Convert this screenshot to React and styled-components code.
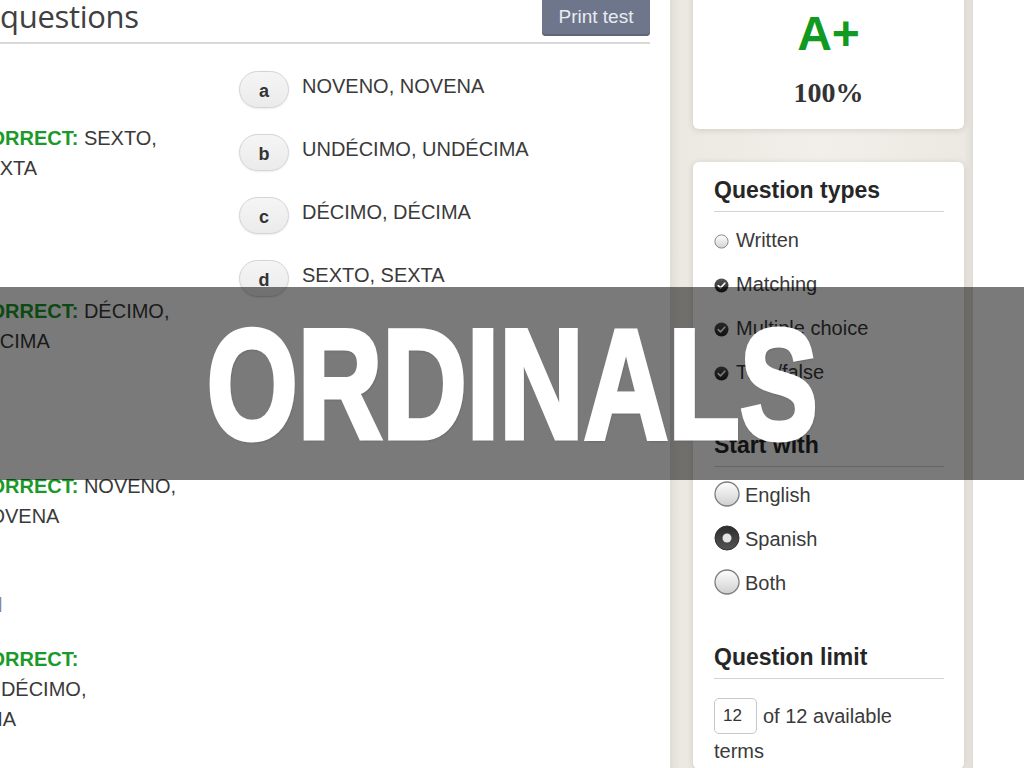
import React from "react";
import styled, { createGlobalStyle } from "styled-components";

const Global = createGlobalStyle`
  html, body { margin: 0; padding: 0; background: #fff; }
  body { font-family: "Liberation Sans", Arial, sans-serif; }
`;

const Page = styled.div`
  position: relative;
  width: 1024px;
  height: 768px;
  overflow: hidden;
  display: flex;
  background: #fff;
`;

const Main = styled.section`
  width: 650px;
  flex: none;
  display: flex;
  flex-direction: column;
`;

const Header = styled.header`
  height: 42px;
  border-bottom: 2px solid #d9d9d9;
  display: flex;
  justify-content: space-between;
  align-items: flex-start;
`;

const Title = styled.h1`
  margin: -4px 0 0 0;
  font-family: "Open Sans", sans-serif;
  font-weight: 400;
  font-size: 31px;
  letter-spacing: -0.3px;
  line-height: 40px;
  color: #404040;
`;

const PrintButton = styled.button`
  margin-top: -6px;
  height: 42px;
  width: 108px;
  border: none;
  border-radius: 4px;
  background: #6d768b;
  box-shadow: inset 0 -2px 0 #5e6679;
  color: #e9ebf1;
  font-family: "Liberation Sans", Arial, sans-serif;
  font-size: 19px;
  padding: 3px 0 0;
`;

const Content = styled.div`
  display: flex;
`;

const Prompts = styled.div`
  width: 239px;
  flex: none;
  overflow: hidden;
  padding-top: 79px;
  display: flex;
  flex-direction: column;
`;

const Block = styled.div`
  margin-top: ${(p) => p.$gap}px;
  display: flex;
  flex-direction: column;
`;

const Line = styled.div`
  margin-left: ${(p) => p.$shift}px;
  white-space: nowrap;
  font-size: 20px;
  line-height: 30px;
  color: ${(p) => (p.$faint ? "#8a8a8a" : "#3a3a3a")};
`;

const Correct = styled.span`
  color: #1b9a2b;
  font-weight: 700;
`;

const Choices = styled.div`
  padding-top: 27px;
  display: flex;
  flex-direction: column;
`;

const Choice = styled.div`
  height: 63px;
  display: flex;
  align-items: flex-start;
  gap: 13px;
`;

const Pill = styled.div`
  width: 48px;
  height: 32px;
  padding-top: 3px;
  box-sizing: content-box;
  border: 1px solid #d4d4d4;
  border-radius: 19px;
  background: linear-gradient(#f5f5f5, #ebebeb);
  box-shadow: 0 1px 2px rgba(0, 0, 0, 0.08);
  display: flex;
  align-items: center;
  justify-content: center;
  font-weight: 700;
  font-size: 18px;
  color: #333;
`;

const ChoiceText = styled.div`
  margin-top: 3px;
  font-size: 20px;
  line-height: 24px;
  color: #3a3a3a;
`;

const Sidebar = styled.aside`
  margin-left: 20px;
  width: 303px;
  flex: none;
  box-sizing: border-box;
  padding: 0 9px 0 23px;
  display: flex;
  flex-direction: column;
  gap: 33px;
  background: linear-gradient(
    to right,
    #e0dcd6 0px,
    #ece8e2 10px,
    #f2efea 50%,
    #ece8e2 calc(100% - 9px),
    #e0dcd6 100%
  );
`;

const Card = styled.div`
  background: #fff;
  border-radius: 6px;
  box-shadow: 0 1px 6px rgba(80, 70, 60, 0.18);
`;

const ScoreCard = styled(Card)`
  margin-top: -20px;
  padding: 28px 0 19px;
  display: flex;
  flex-direction: column;
  align-items: center;
  gap: 16px;
`;

const Grade = styled.div`
  font-weight: 700;
  font-size: 48px;
  line-height: 52px;
  color: #119a22;
`;

const Percent = styled.div`
  font-family: "Liberation Serif", "Times New Roman", serif;
  font-weight: 700;
  font-size: 28px;
  line-height: 34px;
  color: #333;
`;

const OptionsCard = styled(Card)`
  flex: 1;
  padding: 14px 20px 0 21px;
  display: flex;
  flex-direction: column;
`;

const Section = styled.div`
  margin-bottom: ${(p) => p.$after}px;
`;

const Heading = styled.h2`
  margin: 0;
  padding-bottom: 7px;
  border-bottom: 1px solid #d4d4d4;
  font-size: 23px;
  line-height: 28px;
  font-weight: 700;
  color: #262626;
`;

const OptionList = styled.div`
  margin-top: 6px;
  display: flex;
  flex-direction: column;
`;

const Option = styled.div`
  height: 44px;
  display: flex;
  align-items: center;
  gap: ${(p) => (p.$large ? 5 : 7)}px;
  font-size: 20px;
  color: #3a3a3a;
  svg {
    flex: none;
    margin-top: ${(p) => (p.$large ? -3 : 3)}px;
  }
`;

const Limit = styled.div`
  margin-top: 20px;
  font-size: 20px;
  line-height: 35px;
  color: #3a3a3a;
`;

const LimitInput = styled.span`
  display: inline-block;
  vertical-align: middle;
  box-sizing: border-box;
  width: 43px;
  height: 36px;
  margin: -4px 6px 0 0;
  padding: 2px 0 0 8px;
  border: 1px solid #c9c9c9;
  border-radius: 5px;
  font-size: 17px;
  line-height: 30px;
  color: #333;
`;

const Band = styled.div`
  position: absolute;
  left: 0;
  right: 0;
  top: 287px;
  height: 193px;
  background: rgba(0, 0, 0, 0.52);
  display: flex;
  align-items: center;
  justify-content: center;
`;

const BandTitle = styled.div`
  font-family: "Liberation Sans", Arial, sans-serif;
  font-weight: 700;
  font-size: 156px;
  line-height: 1;
  color: #fff;
  transform: scaleX(0.75);
  text-shadow: 1px 2px 3px rgba(0, 0, 0, 0.45);
  -webkit-text-stroke: 5px #fff;
  white-space: nowrap;
`;

const SmallRadio = ({ checked }) => (
  <svg width="15" height="15" viewBox="0 0 15 15">
    <defs>
      <linearGradient id="sr" x1="0" y1="0" x2="0" y2="1">
        <stop offset="0" stopColor="#ffffff" />
        <stop offset="1" stopColor="#d2d2d2" />
      </linearGradient>
      <linearGradient id="sc" x1="0" y1="0" x2="0" y2="1">
        <stop offset="0" stopColor="#555" />
        <stop offset="1" stopColor="#222" />
      </linearGradient>
    </defs>
    {checked ? (
      <>
        <circle cx="7.5" cy="7.5" r="7" fill="url(#sc)" />
        <path d="M4.2 7.6 L6.5 9.9 L10.8 5.2" fill="none" stroke="#fff" strokeWidth="1.6" strokeLinecap="round" strokeLinejoin="round" />
      </>
    ) : (
      <circle cx="7.5" cy="7.5" r="6.6" fill="url(#sr)" stroke="#8a8a8a" strokeWidth="1" />
    )}
  </svg>
);

const LargeRadio = ({ checked }) => (
  <svg width="26" height="26" viewBox="0 0 26 26">
    <defs>
      <linearGradient id="lr" x1="0" y1="0" x2="0" y2="1">
        <stop offset="0" stopColor="#fefefe" />
        <stop offset="1" stopColor="#cfcfcf" />
      </linearGradient>
      <linearGradient id="lc" x1="0" y1="0" x2="0" y2="1">
        <stop offset="0" stopColor="#2c2c2c" />
        <stop offset="1" stopColor="#555" />
      </linearGradient>
    </defs>
    {checked ? (
      <>
        <circle cx="13" cy="13" r="12" fill="url(#lc)" stroke="#333" strokeWidth="1" />
        <circle cx="13" cy="13" r="4.5" fill="#e4e4e4" />
      </>
    ) : (
      <circle cx="13" cy="13" r="12" fill="url(#lr)" stroke="#7d7d7d" strokeWidth="1.3" />
    )}
  </svg>
);

const choices = [
  ["a", "NOVENO, NOVENA"],
  ["b", "UNDÉCIMO, UNDÉCIMA"],
  ["c", "DÉCIMO, DÉCIMA"],
  ["d", "SEXTO, SEXTA"],
];

const blocks = [
  { gap: 0, lines: [[-25, "SEXTO,"], [-27, "SEXTA"]] },
  { gap: 113, lines: [[-25, "DÉCIMO,"], [-28, "DÉCIMA"]] },
  { gap: 115, lines: [[-25, "NOVENO,"], [-25, "NOVENA"]] },
];

export default function App() {
  return (
    <>
      <Global />
      <Page>
        <Main>
          <Header>
            <Title>questions</Title>
            <PrintButton>Print test</PrintButton>
          </Header>
          <Content>
            <Prompts>
              {blocks.map((b, i) => (
                <Block key={i} $gap={b.gap}>
                  <Line $shift={b.lines[0][0]}>
                    <Correct>CORRECT:</Correct> {b.lines[0][1]}
                  </Line>
                  <Line $shift={b.lines[1][0]}>{b.lines[1][1]}</Line>
                </Block>
              ))}
              <Block $gap={59}>
                <Line $shift={-2} $faint>l</Line>
              </Block>
              <Block $gap={24}>
                <Line $shift={-25}>
                  <Correct>CORRECT:</Correct>
                </Line>
                <Line $shift={-28}>UNDÉCIMO,</Line>
                <Line $shift={-14}>MA</Line>
              </Block>
            </Prompts>
            <Choices>
              {choices.map(([k, t]) => (
                <Choice key={k}>
                  <Pill>{k}</Pill>
                  <ChoiceText>{t}</ChoiceText>
                </Choice>
              ))}
            </Choices>
          </Content>
        </Main>
        <Sidebar>
          <ScoreCard>
            <Grade>A+</Grade>
            <Percent>100%</Percent>
          </ScoreCard>
          <OptionsCard>
            <Section $after={37}>
              <Heading>Question types</Heading>
              <OptionList>
                <Option><SmallRadio />Written</Option>
                <Option><SmallRadio checked />Matching</Option>
                <Option><SmallRadio checked />Multiple choice</Option>
                <Option><SmallRadio checked />True/false</Option>
              </OptionList>
            </Section>
            <Section $after={38}>
              <Heading>Start with</Heading>
              <OptionList>
                <Option $large><LargeRadio />English</Option>
                <Option $large><LargeRadio checked />Spanish</Option>
                <Option $large><LargeRadio />Both</Option>
              </OptionList>
            </Section>
            <Section $after={0}>
              <Heading>Question limit</Heading>
              <Limit>
                <LimitInput>12</LimitInput>of 12 available terms
              </Limit>
            </Section>
          </OptionsCard>
        </Sidebar>
        <Band>
          <BandTitle>ORDINALS</BandTitle>
        </Band>
      </Page>
    </>
  );
}
